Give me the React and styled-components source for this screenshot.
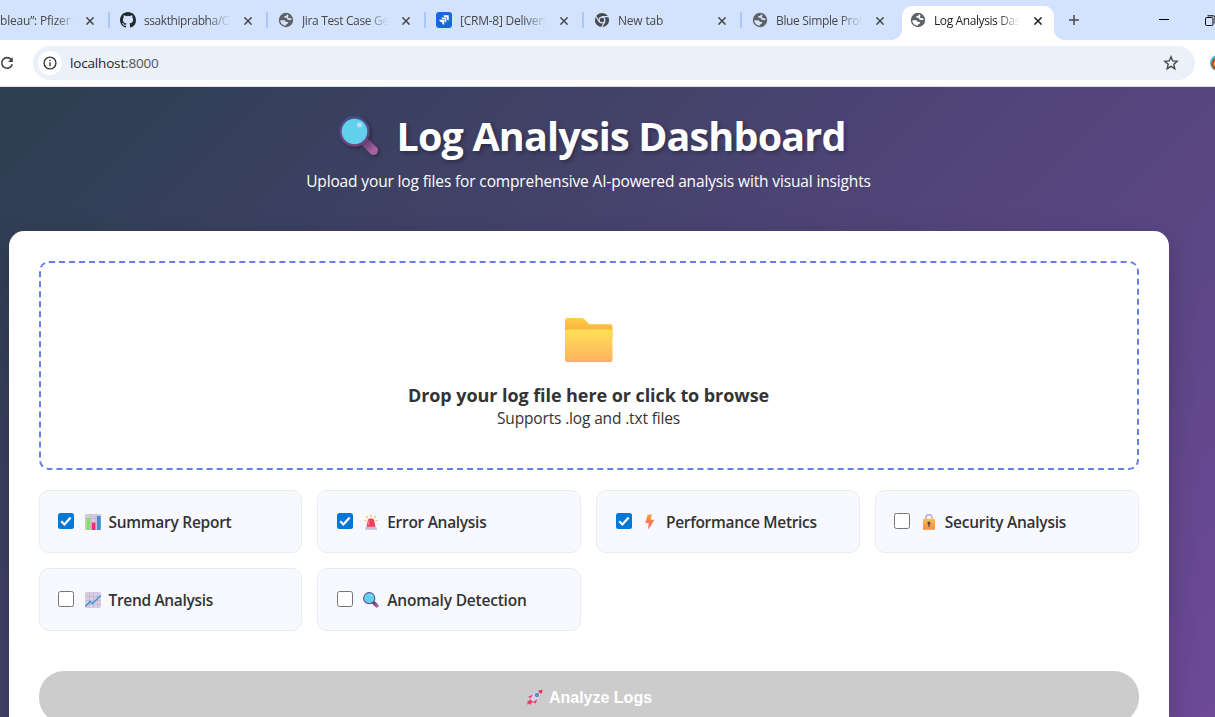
import React from "react";
import styled, { createGlobalStyle, css } from "styled-components";

const GlobalStyle = createGlobalStyle`
  *, *::before, *::after { box-sizing: border-box; }
  html, body { margin: 0; height: 100%; overflow: hidden; }
  body { font-family: "Open Sans", "Noto Sans", sans-serif; color: #333; }
  svg { display: block; flex: none; }
`;

const Window = styled.div`
  display: flex;
  flex-direction: column;
  height: 100vh;
  overflow: hidden;
`;

/* ---------- browser chrome ---------- */

const TabStrip = styled.div`
  display: flex;
  flex: none;
  height: 40px;
  background: #d3e3fd;
  overflow: hidden;
`;

const TabSlot = styled.div`
  flex: none;
  display: flex;
  align-items: center;
  height: 40px;
  width: ${(p) => (p.$cut ? 108 : 158)}px;
  color: ${(p) => (p.$active ? "#1f1f1f" : "#474747")};
  ${(p) =>
    p.$active &&
    css`
      padding: 6px 2px 0 4px;
    `}
`;

const Divider = styled.span`
  flex: none;
  width: 2px;
  height: 16px;
  background: #a8c7fa;
`;

const TabBody = styled.div`
  flex: 1;
  min-width: 0;
  height: ${(p) => (p.$active ? 34 : 40)}px;
  display: flex;
  align-items: center;
  padding-left: ${(p) => (p.$cut ? 0 : p.$active ? 8 : 10)}px;
  padding-bottom: ${(p) => (p.$active ? 6 : 0)}px;
  gap: 8px;
  ${(p) =>
    p.$active &&
    css`
      position: relative;
      background: #fff;
      border-radius: 10px 10px 0 0;
      &::before,
      &::after {
        content: "";
        position: absolute;
        bottom: 0;
        width: 10px;
        height: 10px;
      }
      &::before {
        left: -10px;
        background: radial-gradient(circle at 0 0, transparent 9.5px, #fff 10px);
      }
      &::after {
        right: -10px;
        background: radial-gradient(circle at 100% 0, transparent 9.5px, #fff 10px);
      }
    `}
`;

const TabTitle = styled.span`
  width: ${(p) => (p.$cut ? 76 : 86)}px;
  padding-top: 1px;
  white-space: nowrap;
  font-size: 12px;
  line-height: 18px;
  letter-spacing: ${(p) => p.$track || 0}px;
  mask-image: linear-gradient(to right, #000 ${(p) => (p.$cut ? 56 : 64)}px, transparent 100%);
`;

const CloseBox = styled.span`
  margin-left: ${(p) => (p.$cut ? 2 : 6)}px;
  padding-top: 1px;
`;

const StripButton = styled.span`
  display: flex;
  align-items: center;
  height: 40px;
  margin-left: ${(p) => p.$gap}px;
`;

const Toolbar = styled.div`
  flex: none;
  display: flex;
  align-items: center;
  height: 47px;
  padding-bottom: 1px;
  background: #fff;
  border-bottom: 1px solid #dcdfe5;
  overflow: hidden;
`;

const Omnibox = styled.div`
  flex: none;
  display: flex;
  align-items: center;
  width: 1162px;
  height: 34px;
  margin-left: 19px;
  padding: 0 16px 0 5px;
  border-radius: 17px;
  background: #ebf0fa;
`;

const InfoChip = styled.span`
  display: flex;
  align-items: center;
  justify-content: center;
  width: 24px;
  height: 24px;
  border-radius: 50%;
  background: #fff;
`;

const Address = styled.span`
  flex: 1;
  margin-left: 8px;
  font-size: 13.5px;
  line-height: 20px;
  letter-spacing: -0.17px;
  color: #1f1f1f;
  span { color: #50545a; }
`;

const Avatar = styled.span`
  flex: none;
  width: 16px;
  height: 16px;
  margin-left: 15px;
  border-radius: 50%;
  background: radial-gradient(circle at 50% 55%, #f2a33a 0 4px, #b5402c 5px 6px, #48b8c4 7px);
`;

/* ---------- page ---------- */

const Page = styled.main`
  flex: 1;
  min-height: 0;
  overflow: hidden;
  padding-left: 8.5px;
  background: linear-gradient(135deg, #2c3e50 0%, #764ba2 100%) 0 0 / 1215px 860px no-repeat;
`;

const Container = styled.div`
  width: 1160px;
  display: flex;
  flex-direction: column;
`;

const Header = styled.header`
  display: flex;
  flex-direction: column;
  align-items: center;
  height: 144px;
  padding-top: 22px;
  color: #fff;
`;

const Heading = styled.h1`
  display: flex;
  align-items: center;
  gap: 17px;
  height: 54px;
  margin: 0;
  padding-left: 8px;
  font-size: 39.5px;
  line-height: 54px;
  font-weight: 700;
  letter-spacing: -0.83px;
  white-space: nowrap;
  text-shadow: 2px 2px 4px rgba(0, 0, 0, 0.3);
  svg { filter: drop-shadow(2px 2px 2px rgba(0, 0, 0, 0.3)); }
`;

const Subtitle = styled.p`
  margin: 6px 0 0;
  font-size: 15.5px;
  line-height: 24px;
  letter-spacing: -0.14px;
  white-space: nowrap;
`;

const Panel = styled.section`
  display: flex;
  flex-direction: column;
  height: 600px;
  padding: 30px;
  border-radius: 15px;
  background: #fff;
  box-shadow: 0 10px 30px rgba(0, 0, 0, 0.2);
`;

const DropZone = styled.div`
  display: flex;
  flex-direction: column;
  align-items: center;
  height: 209px;
  padding-top: 55px;
  border: 2px dashed #667eea;
  border-radius: 10px;
`;

const DropTitle = styled.div`
  margin-top: 20px;
  font-size: 18px;
  line-height: 26px;
  font-weight: 700;
  letter-spacing: -0.07px;
  white-space: nowrap;
`;

const DropHint = styled.div`
  font-size: 15.5px;
  line-height: 21px;
  letter-spacing: -0.15px;
  white-space: nowrap;
`;

const Options = styled.div`
  display: grid;
  grid-template-columns: repeat(4, 1fr);
  grid-auto-rows: 63px;
  gap: 15px;
  margin-top: 20px;
`;

const Option = styled.label`
  display: flex;
  align-items: center;
  padding: 0 0 0 18.500px;
  border: 1px solid #e9ecef;
  border-radius: 10px;
  background: #f8f9ff;
`;

const CheckBox = styled.span`
  flex: none;
  display: flex;
  align-items: center;
  justify-content: center;
  width: 16px;
  height: 16px;
  margin: 0 10.500px 1px 0;
  border-radius: 2.5px;
  border: ${(p) => (p.$on ? "0" : "1px solid #767676")};
  background: ${(p) => (p.$on ? "#0078d7" : "#fff")};
`;

const OptionLabel = styled.span`
  margin-left: 8px;
  font-size: 15.5px;
  line-height: 24px;
  font-weight: 600;
  letter-spacing: ${(p) => p.$track}px;
  white-space: nowrap;
`;

const AnalyzeButton = styled.button`
  display: flex;
  align-items: center;
  justify-content: center;
  gap: 6px;
  flex: none;
  height: 52px;
  margin-top: 40px;
  padding: 1px 0 0 1px;
  border: 0;
  border-radius: 25px;
  background: #ccc;
  color: #fff;
  font: 700 16px/20px "Liberation Sans", Arial, sans-serif;
`;

/* ---------- icons ---------- */

const GitHubIcon = () => (
  <svg width="16" height="16" viewBox="0 0 16 16" fill="#24292f">
    <path d="M8 0C3.58 0 0 3.58 0 8c0 3.54 2.29 6.53 5.47 7.59.4.07.55-.17.55-.38 0-.19-.01-.82-.01-1.49-2.01.37-2.53-.49-2.69-.94-.09-.23-.48-.94-.82-1.13-.28-.15-.68-.52-.01-.53.63-.01 1.08.58 1.23.82.72 1.21 1.87.87 2.33.66.07-.52.28-.87.51-1.07-1.78-.2-3.64-.89-3.64-3.95 0-.87.31-1.59.82-2.15-.08-.2-.36-1.02.08-2.12 0 0 .67-.21 2.2.82a7.6 7.6 0 0 1 4 0c1.53-1.04 2.2-.82 2.2-.82.44 1.1.16 1.92.08 2.12.51.56.82 1.27.82 2.15 0 3.07-1.87 3.75-3.65 3.95.29.25.54.73.54 1.48 0 1.07-.01 1.93-.01 2.2 0 .21.15.46.55.38A8.01 8.01 0 0 0 16 8c0-4.42-3.58-8-8-8z" />
  </svg>
);

const GlobeIcon = ({ land = "#d3e3fd" }) => (
  <svg width="16" height="16" viewBox="0 0 16 16">
    <circle cx="8" cy="8" r="7.2" fill="#5f6368" />
    <path
      d="M8.600 2.300c-.6.5-.3 1-1 1.400-.9.500-1.600.3-1.800 1.300-.1.700.5 1.100 1.300 1.100.6 0 1.300-.1 1.700.4.4.6.3 1.300 1.200 1.500 1.100.3 1.700-.5 2.500-.3.7.2.8.800 1.300.700.3-3.200-1.900-5.700-5.200-6.100z"
      fill="#5f6368"
    />
    <path
      d="M2.300 8.200h3.300c1.400 0 2.100.7 2.100 1.700h1.700c.6 0 .9.500.7 1-.4.900-1.100 1-1.900 1.100v1.600C5 13.700 2.200 11.300 2.300 8.200z"
      fill={land}
    />
    <path
      d="M8.700 2.400c-.2 1-.5 1.500-1.600 1.500-.8 0-.9.600-.9 1.200 0 .5.500.7 1.200.7 1.100 0 1.600.3 1.800 1.200.2.700.8.900 1.600.900h2.800c-.1-.6-.3-1.200-.6-1.700h-1.400c-1 0-1.500-.6-1.500-1.300 0-.7.300-1 .300-1.600 0-.5-.7-.8-1.700-.9z"
      fill={land}
    />
  </svg>
);

const JiraIcon = () => (
  <svg width="16" height="16" viewBox="0 0 16 16">
    <rect width="16" height="16" rx="3" fill="#1868db" />
    <g fill="#fff">
      <path d="M7.600 3.300h5.100v5.100c-1.200 0-2-.8-2-2v-.9h-1c-1.200 0-2.100-1-2.100-2.200z" />
      <path d="M5.500 5.500h4.800v4.900c-1.200 0-2-.8-2-2v-.8h-.9c-1.100 0-1.900-.9-1.900-2.100z" opacity=".95" />
      <path d="M3.300 7.800h4.900v4.900c-1.200 0-2-.8-2-2v-.8h-.9c-1.200 0-2-.9-2-2.100z" />
    </g>
    <path d="M7.300 7.700h1v1M9.600 5.500h1v1" stroke="#1868db" strokeWidth=".6" fill="none" />
  </svg>
);

const ChromeIcon = () => (
  <svg width="16" height="16" viewBox="0 0 16 16">
    <circle cx="8" cy="8" r="7.1" fill="#474b50" />
    <circle cx="8" cy="8" r="2.900" fill="none" stroke="#d3e3fd" strokeWidth="1.200" />
    <path d="M8 4.700h6.600M5.100 9.600 1.900 4.200M10.900 9.600 7.700 15" stroke="#d3e3fd" strokeWidth="1.200" fill="none" />
  </svg>
);

const CloseIcon = ({ color = "#474747" }) => (
  <svg width="8" height="8" viewBox="0 0 8 8">
    <path d="M.4.4 7.600 7.600M7.600.4.4 7.600" stroke={color} strokeWidth="1.500" />
  </svg>
);

const PlusIcon = () => (
  <svg width="10" height="10" viewBox="0 0 10 10">
    <path d="M5 0v10M0 5h10" stroke="#474747" strokeWidth="1.500" />
  </svg>
);

const MinimizeIcon = () => (
  <svg width="10" height="10" viewBox="0 0 10 10">
    <path d="M0 4.500h10" stroke="#000" />
  </svg>
);

const RestoreIcon = () => (
  <svg width="11" height="11" viewBox="0 0 11 11" fill="none" stroke="#000">
    <rect x=".5" y="2.500" width="7.500" height="8" rx="1.300" />
    <path d="M2.500.8h5.500a2 2 0 0 1 2 2v5.500" />
  </svg>
);

const ReloadIcon = () => (
  <svg width="14" height="14" viewBox="0 0 14 14">
    <path d="M11.200 3.600A5.300 5.300 0 1 0 12.200 8.200" fill="none" stroke="#474747" strokeWidth="1.600" />
    <path d="M12.800 1v5H8z" fill="#474747" />
  </svg>
);

const InfoIcon = () => (
  <svg width="14" height="14" viewBox="0 0 14 14">
    <circle cx="7" cy="7" r="5.900" fill="none" stroke="#33363b" strokeWidth="1.400" />
    <path d="M7 6.200v4M7 3.700v1.400" stroke="#33363b" strokeWidth="1.400" />
  </svg>
);

const StarIcon = () => (
  <svg width="16" height="16" viewBox="0 0 16 16">
    <path
      d="m8 1.800 1.750 4.150 4.450.4-3.380 2.950 1 4.400L8 11.350 4.180 13.700l1-4.400L1.800 6.350l4.450-.4z"
      fill="none"
      stroke="#474747"
      strokeWidth="1.400"
    />
  </svg>
);

const MagnifierIcon = ({ size = 16 }) => (
  <svg width={size} height={size} viewBox="0 0 40 40">
    <defs>
      <linearGradient id="handle" x1="0" y1="0" x2="1" y2="1">
        <stop offset="0" stopColor="#6a3f78" />
        <stop offset="1" stopColor="#a7639f" />
      </linearGradient>
      <linearGradient id="rim" x1="0" y1="0" x2="0" y2="1">
        <stop offset="0" stopColor="#44508c" />
        <stop offset="1" stopColor="#70437e" />
      </linearGradient>
    </defs>
    <path d="m27 27 7.500 7.500" stroke="url(#handle)" strokeWidth="9" strokeLinecap="round" />
    <circle cx="15.500" cy="15.500" r="15.200" fill="url(#rim)" />
    <circle cx="15.500" cy="15.500" r="12.800" fill="#62cfeb" />
    <circle cx="20.500" cy="9" r="2.500" fill="#b3e3fa" />
  </svg>
);

const FolderIcon = () => (
  <svg width="48" height="44" viewBox="0 0 48 44">
    <defs>
      <linearGradient id="folderBack" x1="0" y1="0" x2="0" y2="1">
        <stop offset="0" stopColor="#ffce4b" />
        <stop offset=".6" stopColor="#fbb43c" />
      </linearGradient>
      <linearGradient id="folderFront" x1="0" y1="0" x2="0" y2="1">
        <stop offset="0" stopColor="#ffe055" />
        <stop offset=".92" stopColor="#ffb65f" />
        <stop offset="1" stopColor="#f9a276" />
      </linearGradient>
    </defs>
    <path d="M2.500 0h14c1 0 2 .4 2.700 1.100L24.500 6.200h20.500a2.500 2.500 0 0 1 2.500 2.500V20H0V2.500a2.500 2.500 0 0 1 2.500-2.500z" fill="url(#folderBack)" />
    <path d="M2.500 11.500h42.500a2.500 2.500 0 0 1 2.500 2.500V41.500a2.500 2.500 0 0 1-2.500 2.500H2.500a2.500 2.500 0 0 1-2.500-2.500V14a2.500 2.500 0 0 1 2.500-2.500z" fill="url(#folderFront)" />
  </svg>
);

const BarsIcon = () => (
  <svg width="16" height="16" viewBox="0 0 16 16">
    <rect width="16" height="16" rx="1" fill="#d3c9dc" />
    <path d="M0 4.500h16M0 8.500h16M0 12.500h16M6 0v16M11 0v16" stroke="#bdb0ca" strokeWidth=".6" />
    <rect x="1.500" y="4" width="3.700" height="12" fill="#86e06b" />
    <rect x="6.800" y="8.700" width="3.600" height="7.300" fill="#ec2f75" />
    <rect x="12" y="2" width="3.700" height="14" fill="#3f8edc" />
  </svg>
);

const TrendIcon = () => (
  <svg width="16" height="16" viewBox="0 0 16 16">
    <rect width="16" height="16" rx="1" fill="#d8d0e2" />
    <path d="M0 4.500h16M0 8.500h16M0 12.500h16M4.500 0v16M8.500 0v16M12.500 0v16" stroke="#bbaccb" strokeWidth=".6" />
    <path d="m.5 14.500 4.500-5 2.500 2L15.700 3.500" fill="none" stroke="#3c94d8" strokeWidth="1.400" />
  </svg>
);

const SirenIcon = () => (
  <svg width="16" height="16" viewBox="0 0 16 16">
    <path d="m3 2.200 1.800 1.800M8 .3v3M13 2.200l-1.800 1.800M1.500 6.500l1.800.4M14.500 6.500l-1.800.4" stroke="#fdbd4c" strokeWidth="1.200" />
    <path d="M3.500 13 4.800 6.500c.2-1.400 1.300-2 3.200-2s3 .6 3.200 2L12.500 13z" fill="#f43e5d" />
    <path d="M6 6.500 5.300 11" stroke="#ff8f93" />
    <path d="M3 12.800h10l1.300 3h-12.600z" fill="#c8bbdf" />
  </svg>
);

const BoltIcon = () => (
  <svg width="16" height="16" viewBox="0 0 16 16">
    <defs>
      <linearGradient id="bolt" x1="0" y1="0" x2="0" y2="1">
        <stop offset="0" stopColor="#fba340" />
        <stop offset="1" stopColor="#fa5260" />
      </linearGradient>
    </defs>
    <path d="M5.700.5h4.200L8.800 5.800H12.500L6.200 15.500 6.700 9H3.300z" fill="url(#bolt)" />
  </svg>
);

const LockIcon = () => (
  <svg width="16" height="16" viewBox="0 0 16 16">
    <defs>
      <linearGradient id="lock" x1="0" y1="0" x2="0" y2="1">
        <stop offset="0" stopColor="#fdbf45" />
        <stop offset="1" stopColor="#f88b45" />
      </linearGradient>
    </defs>
    <path d="M4.900 6V3.600a3.100 2.900 0 0 1 6.200 0V6" fill="none" stroke="#b9afc9" strokeWidth="1.600" />
    <rect x="2" y="4.800" width="12" height="11" rx=".8" fill="url(#lock)" />
    <circle cx="8" cy="9" r="1.600" fill="#54435c" />
    <path d="M8 9v4" stroke="#54435c" strokeWidth="1.300" />
  </svg>
);

const RocketIcon = () => (
  <svg width="17" height="17" viewBox="0 0 17 17">
    <path d="M3.500 7.500 8 5.500 6 10zM9.500 13.500l2-4.500-5 2.500z" fill="#f2387f" />
    <path d="M2 7.800 6.500 6 5.500 9.500zM9 15l2.200-4L7 12z" fill="#f2387f" />
    <path d="M4.500 10.500C6 6 9.500 2 15.500 1.300 15.300 7 11.500 11 6.800 12.700z" fill="#d9d2e8" />
    <path d="M12 2.300C13.300 1.300 15 .8 16.500.8c0 1.500-.5 3-1.500 4.200z" fill="#ef2f50" />
    <circle cx="11" cy="6" r="2" fill="#4a6f9f" />
    <circle cx="11" cy="6" r="1.200" fill="#45a4e8" />
    <path d="m4 10 3.300 3.200-2 .8-1 2-1.200-1.500L1 15.700l.8-2.600L.5 12.500l2.500-.7z" fill="#f63d68" />
  </svg>
);

const TickIcon = () => (
  <svg width="16" height="16" viewBox="0 0 16 16">
    <path d="m3.200 8.300 3.200 3.200 6.300-7" fill="none" stroke="#fff" strokeWidth="2.200" />
  </svg>
);

/* ---------- data ---------- */

const tabs = [
  { title: "bleau”: Pfizer -", cut: true, track: -0.2 },
  { title: "ssakthiprabha/O", icon: <GitHubIcon />, track: -0.43, divider: true },
  { title: "Jira Test Case Ge", icon: <GlobeIcon />, track: -0.35, divider: true },
  { title: "[CRM-8] Delivery", icon: <JiraIcon />, track: -0.25, divider: true },
  { title: "New tab", icon: <ChromeIcon />, track: -0.2, divider: true },
  { title: "Blue Simple Prof", icon: <GlobeIcon />, track: -0.35, divider: true },
  { title: "Log Analysis Das", icon: <GlobeIcon land="#fff" />, track: -0.4, active: true },
];

const options = [
  { label: "Summary Report", icon: <BarsIcon />, on: true, track: -0.27 },
  { label: "Error Analysis", icon: <SirenIcon />, on: true, track: -0.3 },
  { label: "Performance Metrics", icon: <BoltIcon />, on: true, track: -0.32 },
  { label: "Security Analysis", icon: <LockIcon />, on: false, track: -0.25 },
  { label: "Trend Analysis", icon: <TrendIcon />, on: false, track: -0.33 },
  { label: "Anomaly Detection", icon: <MagnifierIcon />, on: false, track: -0.2 },
];

function Tab({ title, icon, cut, active, divider, track }) {
  return (
    <TabSlot $cut={cut} $active={active}>
      {divider && <Divider />}
      <TabBody $cut={cut} $active={active}>
        {icon}
        <TabTitle $cut={cut} $track={track}>{title}</TabTitle>
        <CloseBox $cut={cut}>
          <CloseIcon color={active ? "#1f1f1f" : "#474747"} />
        </CloseBox>
      </TabBody>
    </TabSlot>
  );
}

export default function App() {
  return (
    <Window>
      <GlobalStyle />
      <TabStrip>
        {tabs.map((t) => (
          <Tab key={t.title} {...t} />
        ))}
        <StripButton $gap={13}><PlusIcon /></StripButton>
        <StripButton $gap={80}><MinimizeIcon /></StripButton>
        <StripButton $gap={36}><RestoreIcon /></StripButton>
      </TabStrip>
      <Toolbar>
        <ReloadIcon />
        <Omnibox>
          <InfoChip><InfoIcon /></InfoChip>
          <Address>localhost<span>:8000</span></Address>
          <StarIcon />
        </Omnibox>
        <Avatar />
      </Toolbar>
      <Page>
        <Container>
          <Header>
            <Heading>
              <MagnifierIcon size={40} />
              <span>Log Analysis Dashboard</span>
            </Heading>
            <Subtitle>
              Upload your log files for comprehensive AI-powered analysis with visual insights
            </Subtitle>
          </Header>
          <Panel>
            <DropZone>
              <FolderIcon />
              <DropTitle>Drop your log file here or click to browse</DropTitle>
              <DropHint>Supports .log and .txt files</DropHint>
            </DropZone>
            <Options>
              {options.map((o) => (
                <Option key={o.label}>
                  <CheckBox $on={o.on}>{o.on && <TickIcon />}</CheckBox>
                  {o.icon}
                  <OptionLabel $track={o.track}>{o.label}</OptionLabel>
                </Option>
              ))}
            </Options>
            <AnalyzeButton type="button">
              <RocketIcon />
              <span>Analyze Logs</span>
            </AnalyzeButton>
          </Panel>
        </Container>
      </Page>
    </Window>
  );
}
